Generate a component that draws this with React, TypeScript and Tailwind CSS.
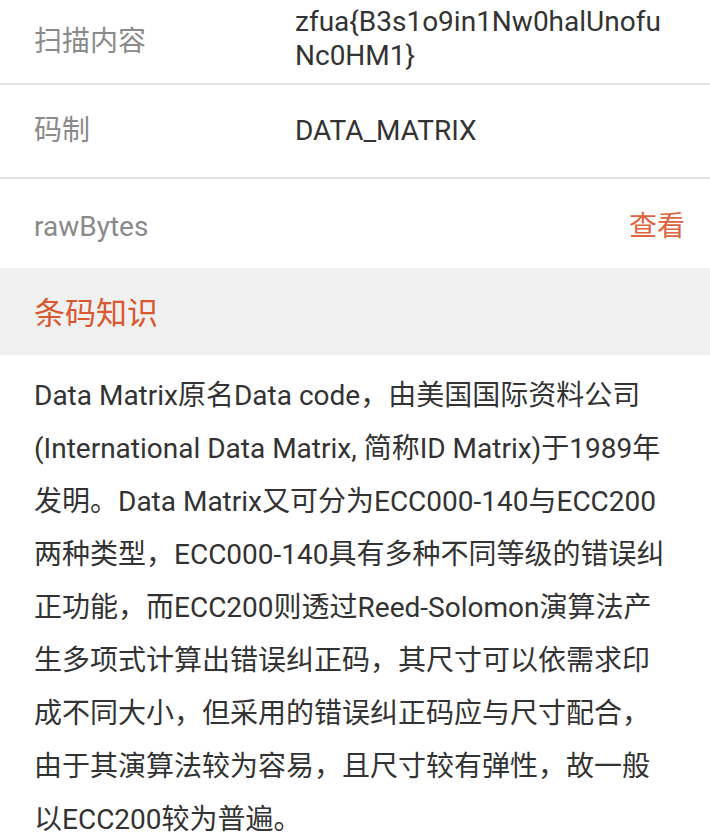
import React from "react";

const FONT = { fontFamily: 'Roboto, "Noto Sans CJK SC", sans-serif' };

const knowledge = [
  "Data Matrix原名Data code，由美国国际资料公司",
  "(International Data Matrix, 简称ID Matrix)于1989年",
  "发明。Data Matrix又可分为ECC000-140与ECC200",
  "两种类型，ECC000-140具有多种不同等级的错误纠",
  "正功能，而ECC200则透过Reed-Solomon演算法产",
  "生多项式计算出错误纠正码，其尺寸可以依需求印",
  "成不同大小，但采用的错误纠正码应与尺寸配合，",
  "由于其演算法较为容易，且尺寸较有弹性，故一般",
  "以ECC200较为普遍。",
];

export default function App() {
  return (
    <div className="w-[710px] h-[838px] overflow-hidden bg-white" style={FONT}>
      {/* Scan content */}
      <div className="flex items-center h-[85px] px-[34px] border-b-2 border-[#e3e3e3]">
        <div className="w-[261px] text-[28px] text-[#8a8a8a]">扫描内容</div>
        <div className="flex-1 text-[28px] leading-[34px] text-[#333] break-all -mt-[6px]">
          zfua{"{"}B3s1o9in1Nw0halUnofu
          <br />
          Nc0HM1{"}"}
        </div>
      </div>

      {/* Format */}
      <div className="flex items-center h-[94px] px-[34px] border-b-2 border-[#e3e3e3]">
        <div className="w-[261px] text-[28px] text-[#8a8a8a]">码制</div>
        <div className="flex-1 text-[28px] text-[#333]">DATA_MATRIX</div>
      </div>

      {/* rawBytes */}
      <div className="flex items-center justify-between h-[89px] pt-[6px] pl-[34px] pr-[25px]">
        <div className="text-[28px] text-[#8a8a8a]">rawBytes</div>
        <div className="text-[28px] text-[#e0643f]">查看</div>
      </div>

      {/* Section header */}
      <div className="flex items-center h-[87px] pt-[6px] px-[34px] bg-[#f0f0f0]">
        <div className="text-[31px] text-[#d9582f]">条码知识</div>
      </div>

      {/* Knowledge body */}
      <div className="px-[34px] pt-[14px] text-[28px] leading-[53px] text-[#333]">
        {knowledge.map((line, i) => (
          <div key={i} className="whitespace-nowrap">
            {line}
          </div>
        ))}
      </div>
    </div>
  );
}
